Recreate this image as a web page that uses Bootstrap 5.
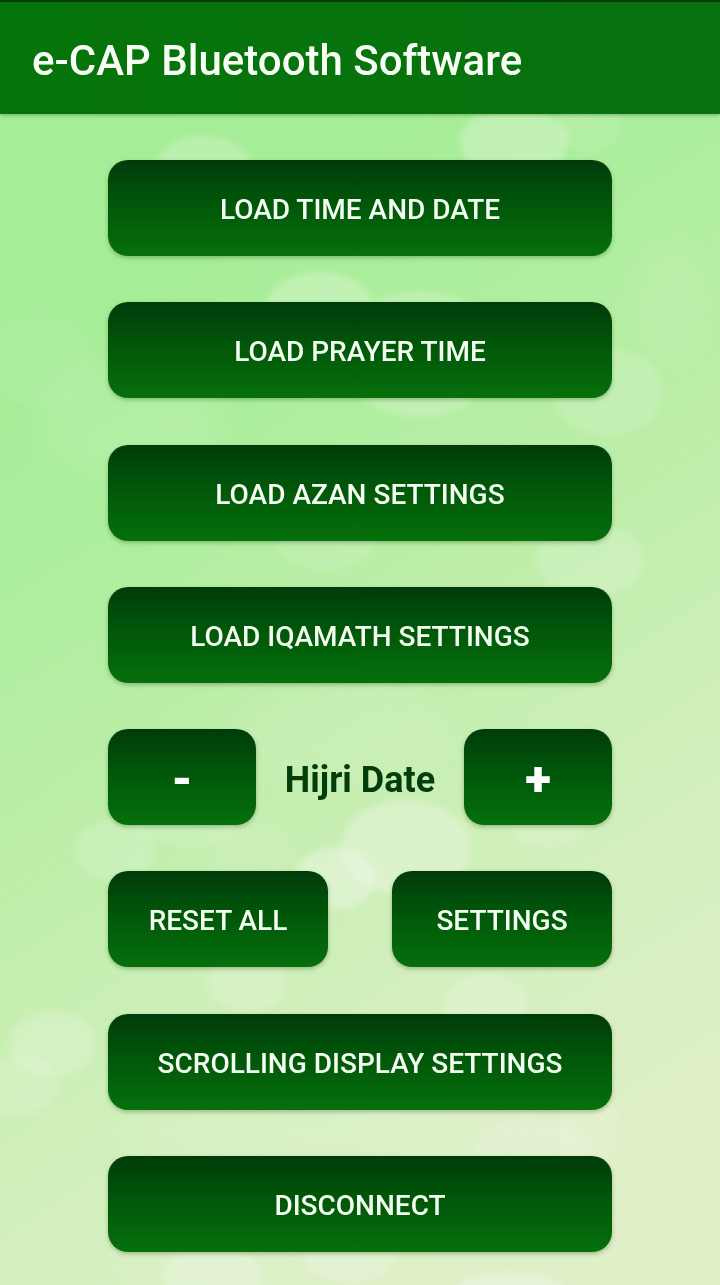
<!DOCTYPE html>
<html lang="en">
<head>
<meta charset="utf-8">
<meta name="viewport" content="width=device-width, initial-scale=1">
<title>e-CAP Bluetooth Software</title>
<link href="https://cdn.jsdelivr.net/npm/bootstrap@5.3.0/dist/css/bootstrap.min.css" rel="stylesheet">
<style>
  body { font-family: Roboto, "Liberation Sans", sans-serif; background: #c4f0b0; }
  .app-bar { height: 114px; padding: 6px 32px 0; border-top: 2px solid #043c0c; background: linear-gradient(90deg, #05740a, #08720f); box-shadow: 0 1px 4px rgba(20, 70, 10, .4); z-index: 1; }
  .app-title { font-size: 42px; line-height: 48px; font-weight: 500; color: #f8fff5; }
  .backdrop { z-index: 0; }
  .menu { width: 70%; padding: 46px 0 33px; z-index: 1; }
  .btn-cap { min-height: 96px; border: 0; border-radius: 20px; padding: 4px 8px 0; color: #f4fff2; font-size: 28px; line-height: 36px; font-weight: 500; text-transform: uppercase; background: linear-gradient(#003b0a, #005409 40%, #06700b); box-shadow: 0 2px 4px rgba(20, 70, 10, .3); }
  .btn-cap:hover, .btn-cap:active { color: #fff; background: #06700b; }
  .btn-step { padding: 6px 0 0; color: #fff; font-size: 48px; line-height: 56px; font-weight: 900; }
  .date-row { display: grid; grid-template-columns: 148px 1fr 148px; }
  .pair-row { display: grid; grid-template-columns: 1fr 1fr; column-gap: 64px; }
  .date-label { padding-top: 6px; color: #023d0b; font-size: 36px; line-height: 44px; font-weight: 700; }
</style>
</head>
<body>
<div class="min-vh-100 d-flex flex-column position-relative">
  <svg class="backdrop position-absolute top-0 start-0 w-100 h-100" viewBox="0 0 720 1285" preserveAspectRatio="none" aria-hidden="true">
    <defs>
      <linearGradient id="base" gradientUnits="userSpaceOnUse" x1="0" y1="380" x2="537" y2="1209">
        <stop offset="0" stop-color="#a6ed97"/><stop offset=".2" stop-color="#aeee9e"/>
        <stop offset=".4" stop-color="#bceea8"/><stop offset=".6" stop-color="#caefb5"/><stop offset=".8" stop-color="#d6efbf"/><stop offset="1" stop-color="#dfefc7"/>
      </linearGradient>
      <filter id="soft"><feGaussianBlur stdDeviation="3"/></filter>
      <filter id="softer" x="-30%" y="-30%" width="160%" height="160%"><feGaussianBlur stdDeviation="14"/></filter>
    </defs>
    <rect width="720" height="1285" fill="url(#base)"/>
    <g fill="#f2f8ea" filter="url(#softer)">
      <ellipse cx="670" cy="300" rx="35" ry="60" opacity=".12"/>
      <ellipse cx="130" cy="420" rx="90" ry="60" opacity=".12"/>
      <ellipse cx="340" cy="730" rx="110" ry="50" opacity=".12"/>
      <ellipse cx="230" cy="1240" rx="120" ry="50" opacity=".12"/>
      <ellipse cx="360" cy="1130" rx="250" ry="30" opacity=".15"/>
    </g>
    <g fill="#f2f8ea" filter="url(#soft)">
      <ellipse cx="203" cy="168" rx="48" ry="32" opacity=".28"/>
      <ellipse cx="514" cy="142" rx="54" ry="36" opacity=".32"/>
      <ellipse cx="590" cy="118" rx="32" ry="36" opacity=".14"/>
      <ellipse cx="320" cy="308" rx="54" ry="36" opacity=".32"/>
      <ellipse cx="420" cy="354" rx="80" ry="63" opacity=".26"/>
      <ellipse cx="608" cy="392" rx="54" ry="43" opacity=".2"/>
      <ellipse cx="40" cy="360" rx="52" ry="46" opacity=".08"/>
      <ellipse cx="325" cy="535" rx="52" ry="35" opacity=".15"/>
      <ellipse cx="590" cy="560" rx="54" ry="37" opacity=".2"/>
      <ellipse cx="190" cy="815" rx="60" ry="32" opacity=".14"/>
      <ellipse cx="115" cy="850" rx="40" ry="30" opacity=".2"/>
      <ellipse cx="250" cy="850" rx="42" ry="35" opacity=".08"/>
      <ellipse cx="406" cy="848" rx="65" ry="48" opacity=".4"/>
      <ellipse cx="335" cy="879" rx="41" ry="31" opacity=".45"/>
      <ellipse cx="548" cy="826" rx="38" ry="22" opacity=".22"/>
      <ellipse cx="247" cy="982" rx="40" ry="29" opacity=".26"/>
      <ellipse cx="485" cy="1004" rx="42" ry="30" opacity=".28"/>
      <ellipse cx="52" cy="1044" rx="43" ry="33" opacity=".25"/>
      <ellipse cx="20" cy="1085" rx="38" ry="31" opacity=".2"/>
      <ellipse cx="530" cy="1150" rx="55" ry="34" opacity=".22"/>
      <ellipse cx="590" cy="1130" rx="32" ry="38" opacity=".18"/>
      <ellipse cx="212" cy="1275" rx="50" ry="28" opacity=".35"/>
      <ellipse cx="350" cy="1256" rx="46" ry="28" opacity=".3"/>
      <ellipse cx="510" cy="1292" rx="56" ry="20" opacity=".45"/>
    </g>
  </svg>

  <header class="app-bar navbar position-relative">
    <h1 class="app-title mb-0">e-CAP Bluetooth Software</h1>
  </header>

  <main class="menu position-relative mx-auto flex-grow-1 d-flex flex-column justify-content-between">
    <button type="button" class="btn btn-cap w-100">Load time and date</button>
    <button type="button" class="btn btn-cap w-100">Load prayer time</button>
    <button type="button" class="btn btn-cap w-100">Load azan settings</button>
    <button type="button" class="btn btn-cap w-100">Load iqamath settings</button>
    <div class="date-row align-items-center" role="group" aria-labelledby="hijri">
      <button type="button" class="btn btn-cap btn-step">-</button>
      <span id="hijri" class="date-label text-center text-nowrap">Hijri Date</span>
      <button type="button" class="btn btn-cap btn-step">+</button>
    </div>
    <div class="pair-row">
      <button type="button" class="btn btn-cap">Reset all</button>
      <button type="button" class="btn btn-cap">Settings</button>
    </div>
    <button type="button" class="btn btn-cap w-100">Scrolling display settings</button>
    <button type="button" class="btn btn-cap w-100">Disconnect</button>
  </main>
</div>
<script src="https://cdn.jsdelivr.net/npm/bootstrap@5.3.0/dist/js/bootstrap.bundle.min.js"></script>
</body>
</html>
